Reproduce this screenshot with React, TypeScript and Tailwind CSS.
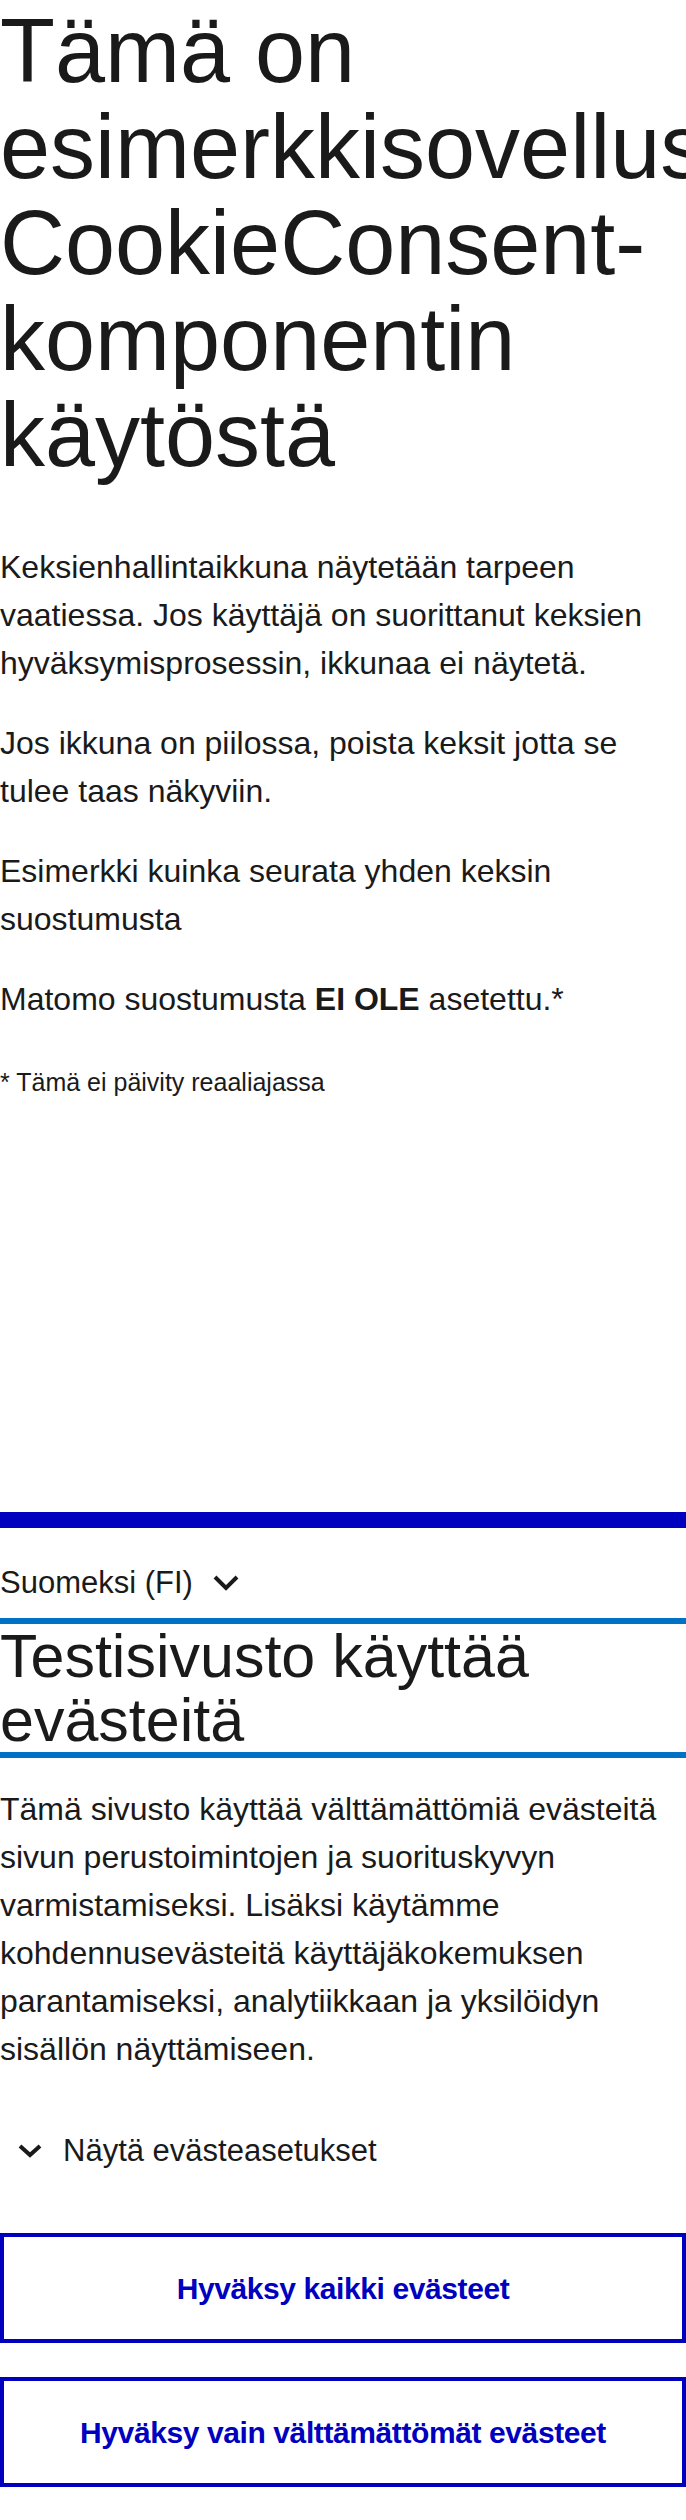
import React from 'react'

function Chevron({ w, h }: { w: number; h: number }) {
  return (
    <svg width={w} height={h} viewBox={`0 0 ${w} ${h}`} fill="none" aria-hidden="true">
      <path
        d={`M2 2 L${w / 2} ${h - 3} L${w - 2} 2`}
        stroke="#1a1a1a"
        strokeWidth={4}
        strokeLinejoin="miter"
      />
    </svg>
  )
}

function ConsentButton({ children }: { children: React.ReactNode }) {
  return (
    <button className="flex h-[110px] w-full items-center justify-center border-4 border-[#0000bf] bg-white text-[30px] font-bold tracking-[-0.4px] text-[#0000bf]">
      {children}
    </button>
  )
}

export default function App() {
  return (
    <div className="flex min-h-screen flex-col overflow-x-hidden bg-white font-['Liberation_Sans',Arial,sans-serif] text-[#1a1a1a]">
      <main className="pt-[3px]">
        <h1 className="text-[90px] leading-[96px]">
          Tämä on esimerkkisovellus CookieConsent-komponentin käytöstä
        </h1>
        <div className="mt-[60px] flex flex-col gap-8 text-[32px] leading-[48px]">
          <p>
            Keksienhallintaikkuna näytetään tarpeen vaatiessa. Jos käyttäjä on suorittanut keksien
            hyväksymisprosessin, ikkunaa ei näytetä.
          </p>
          <p>Jos ikkuna on piilossa, poista keksit jotta se tulee taas näkyviin.</p>
          <p>Esimerkki kuinka seurata yhden keksin suostumusta</p>
          <p>
            Matomo suostumusta <strong className="font-bold">EI OLE</strong> asetettu.*
          </p>
        </div>
        <p className="mt-[40px] text-[25px] leading-[38px]">* Tämä ei päivity reaaliajassa</p>
      </main>

      <section className="mt-auto border-t-[16px] border-[#0000bf] pb-[33px]">
        <div className="mt-[31px] flex h-[48px] items-center gap-[20px] text-[31px] leading-[48px]">
          <span>Suomeksi (FI)</span>
          <Chevron w={26} h={16} />
        </div>

        <h2 className="mt-[11px] border-y-[6px] border-[#0072c6] text-[61px] leading-[64px]">
          Testisivusto käyttää evästeitä
        </h2>

        <p className="mt-[27px] text-[32px] leading-[48px]">
          Tämä sivusto käyttää välttämättömiä evästeitä sivun perustoimintojen ja suorituskyvyn
          varmistamiseksi. Lisäksi käytämme kohdennusevästeitä käyttäjäkokemuksen parantamiseksi,
          analytiikkaan ja yksilöidyn sisällön näyttämiseen.
        </p>

        <div className="mt-[54px] flex h-[48px] items-center gap-[21px] pl-[18px] text-[31px] leading-[48px]">
          <Chevron w={24} h={14} />
          <span>Näytä evästeasetukset</span>
        </div>

        <div className="mt-[58px] flex flex-col gap-[34px]">
          <ConsentButton>Hyväksy kaikki evästeet</ConsentButton>
          <ConsentButton>Hyväksy vain välttämättömät evästeet</ConsentButton>
        </div>
      </section>
    </div>
  )
}
